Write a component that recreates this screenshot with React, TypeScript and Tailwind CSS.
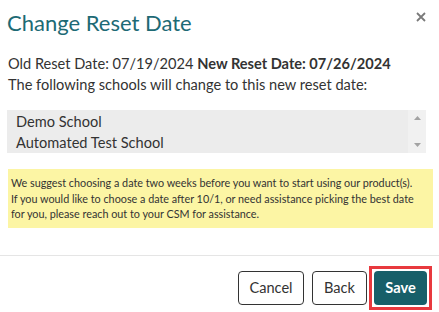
import React from 'react';

export default function App() {
  return (
    <div
      className="w-[439px] h-[312px] bg-white text-[#333] overflow-hidden"
      style={{ fontFamily: 'Lato, "Noto Sans", sans-serif' }}
    >
      <div className="flex items-start justify-between pl-[7px] pr-[12px] pt-[9px] h-[53px]">
        <h2 className="text-[22px] leading-[28px] text-[#1d6a75]">Change Reset Date</h2>
        <button className="text-[#777]">
          <svg width="12" height="12" viewBox="0 0 12 12" className="mt-[2px]">
            <path d="M2 2 L10 10 M10 2 L2 10" stroke="#7a7a7a" strokeWidth="1.8" />
          </svg>
        </button>
      </div>

      <div className="px-[8px]">
        <p className="text-[14.6px] leading-[21px]">
          Old Reset Date: 07/19/2024 <span className="font-bold">New Reset Date: 07/26/2024</span>
        </p>
        <p className="text-[14.6px] leading-[21px]">The following schools will change to this new reset date:</p>

        <div className="mt-[15px] w-[419px] -ml-px h-[43px] bg-[#ececec] flex">
          <div className="flex-1 pl-[9px] pt-[1px] text-[14.6px] leading-[21px]">
            <div>Demo School</div>
            <div>Automated Test School</div>
          </div>
          <div className="w-[18px] bg-[#f1f1f1] flex flex-col items-center justify-between py-[6px]">
            <svg width="7" height="4" viewBox="0 0 7 4"><path d="M0 4 L3.5 0 L7 4 Z" fill="#a3a3a3" /></svg>
            <svg width="7" height="4" viewBox="0 0 7 4"><path d="M0 0 L3.5 4 L7 0 Z" fill="#a3a3a3" /></svg>
          </div>
        </div>

        <div className="mt-[16px] w-[425px] bg-[#fcf5a4] px-[3px] py-[6px] text-[10.8px] leading-[15.5px] text-[#333] whitespace-nowrap">
          We suggest choosing a date two weeks before you want to start using our product(s).
          <br />
          If you would like to choose a date after 10/1, or need assistance picking the best date
          <br />
          for you, please reach out to your CSM for assistance.
        </div>
      </div>

      <div className="mt-[27px] border-t border-[#e5e5e5] flex justify-end items-center gap-[8px] pr-[7px] pt-[10px]">
        <button className="h-[34px] w-[66px] rounded-[4px] border border-[#333] text-[14.6px] text-[#333]">
          Cancel
        </button>
        <button className="h-[34px] w-[55px] rounded-[4px] border border-[#333] text-[14.6px] text-[#333]">
          Back
        </button>
        <div className="border-[3px] border-[#e8393e] p-[2px] -ml-[6px]">
          <button className="h-[34px] w-[53px] rounded-[4px] bg-[#175f69] text-white text-[14.6px] font-bold block">
            Save
          </button>
        </div>
      </div>
    </div>
  );
}
